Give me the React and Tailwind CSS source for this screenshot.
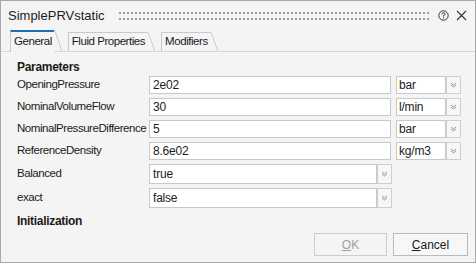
import React from "react";

const font = { fontFamily: '"Liberation Sans", Arial, sans-serif' };

function Chevron() {
  return (
    <svg width="7" height="6" viewBox="0 0 7 6">
      <path d="M1 1 L3.5 3 L6 1 M1 3 L3.5 5 L6 3" stroke="#9a9a9a" strokeWidth="1" fill="none" />
    </svg>
  );
}

function DropBtn() {
  return (
    <div className="w-[15px] h-full border border-[#cfcfcf] bg-[#f7f7f7] flex items-center justify-center">
      <Chevron />
    </div>
  );
}

function Tab({ label, selected }) {
  return (
    <div className={"flex items-stretch " + (selected ? "h-[22px] -mb-px z-10" : "h-[19px]")}>
      <div
        className={
          "flex items-center border-l border-[#c9c9c9] bg-[#f4f4f4] pl-[3px] pr-[2px] " +
          (selected ? "border-t-2 border-t-[#1a73b8]" : "border-t")
        }
      >
        <span className="text-[11.5px] text-[#1b1b1b] leading-none whitespace-nowrap tracking-[-0.45px]">{label}</span>
      </div>
      <svg width="8" height="100%" className="block" viewBox="0 0 8 22" preserveAspectRatio="none">
        <path d="M0 0.5 L1 0.5 L8 22" stroke="#c9c9c9" strokeWidth="1" fill="#f4f4f4" />
      </svg>
    </div>
  );
}

const lbl = "w-[132px] text-[11.5px] text-[#1b1b1b] whitespace-nowrap tracking-[-0.45px]";
const val = "h-full border border-[#c8c8c8] bg-white flex items-center text-[12px] text-[#1b1b1b] tracking-[-0.2px]";

function Row({ label, value, unit }) {
  return (
    <div className="flex items-center h-[18px]">
      <div className={lbl}>{label}</div>
      <div className={"w-[242px] pl-[3px] " + val}>{value}</div>
      <div className={"ml-[5px] w-[50px] pl-[2px] " + val}>{unit}</div>
      <DropBtn />
    </div>
  );
}

function BoolRow({ label, value }) {
  return (
    <div className="flex items-center h-[20px]">
      <div className={lbl}>{label}</div>
      <div className={"w-[228px] pl-[3px] " + val}>{value}</div>
      <DropBtn />
    </div>
  );
}

export default function App() {
  return (
    <div
      className="w-[476px] h-[263px] border border-[#a9a9a9] bg-[#f4f4f4] flex flex-col overflow-hidden"
      style={font}
    >
      <div className="h-[29px] flex items-center pl-[7px] pr-[8px]">
        <span className="text-[13px] text-[#1b1b1b]">SimplePRVstatic</span>
        <svg className="ml-[14px] flex-1 block" height="9">
          <defs>
            <pattern id="dots" width="4" height="6" patternUnits="userSpaceOnUse">
              <rect x="0" y="1" width="2" height="2" fill="#a0a0a0" />
            </pattern>
          </defs>
          <rect x="0" y="0" width="100%" height="9" fill="url(#dots)" />
        </svg>
        <svg className="ml-[8px]" width="11" height="11" viewBox="0 0 11 11">
          <circle cx="5.5" cy="5.5" r="4.7" stroke="#333" strokeWidth="1" fill="none" />
          <path d="M3.9 4.3 Q4 2.9 5.5 2.9 Q7.1 2.9 7.1 4.2 Q7.1 5.1 5.5 5.6 L5.5 6.6" stroke="#333" strokeWidth="1" fill="none" />
          <rect x="5" y="7.5" width="1" height="1" fill="#333" />
        </svg>
        <svg className="ml-[7px]" width="11" height="11" viewBox="0 0 11 11">
          <path d="M1 1 L10 10 M10 1 L1 10" stroke="#333" strokeWidth="1.1" />
        </svg>
      </div>
      <div className="flex items-end pl-[9px] gap-[6px] border-b border-[#d6d6d6] h-[22px]">
        <Tab label="General" selected />
        <Tab label="Fluid Properties" />
        <Tab label="Modifiers" />
      </div>
      <div className="flex flex-col pl-[16px] pt-[8px]">
        <div className="text-[12px] font-bold text-[#1b1b1b] leading-[14px] tracking-[-0.3px]">Parameters</div>
        <div className="flex flex-col gap-[4px] mt-[2px]">
          <Row label="OpeningPressure" value="2e02" unit="bar" />
          <Row label="NominalVolumeFlow" value="30" unit="l/min" />
          <Row label="NominalPressureDifference" value="5" unit="bar" />
          <Row label="ReferenceDensity" value="8.6e02" unit="kg/m3" />
        </div>
        <div className="flex flex-col gap-[4px] mt-[4px]">
          <BoolRow label="Balanced" value="true" />
          <BoolRow label="exact" value="false" />
        </div>
        <div className="text-[12px] font-bold text-[#1b1b1b] leading-[14px] mt-[6px] tracking-[-0.3px]">Initialization</div>
      </div>
      <div className="flex justify-end gap-[6px] pr-[7px] mt-[5px]">
        <div className="w-[73px] h-[23px] border border-[#cccccc] bg-[#f4f4f4] flex items-center justify-center text-[12px] text-[#a0a0a0]">
          <span><u>O</u>K</span>
        </div>
        <div className="w-[75px] h-[23px] border border-[#b9b9b9] bg-[#f7f7f7] flex items-center justify-center text-[12px] text-[#1b1b1b]">
          <span><u>C</u>ancel</span>
        </div>
      </div>
    </div>
  );
}
